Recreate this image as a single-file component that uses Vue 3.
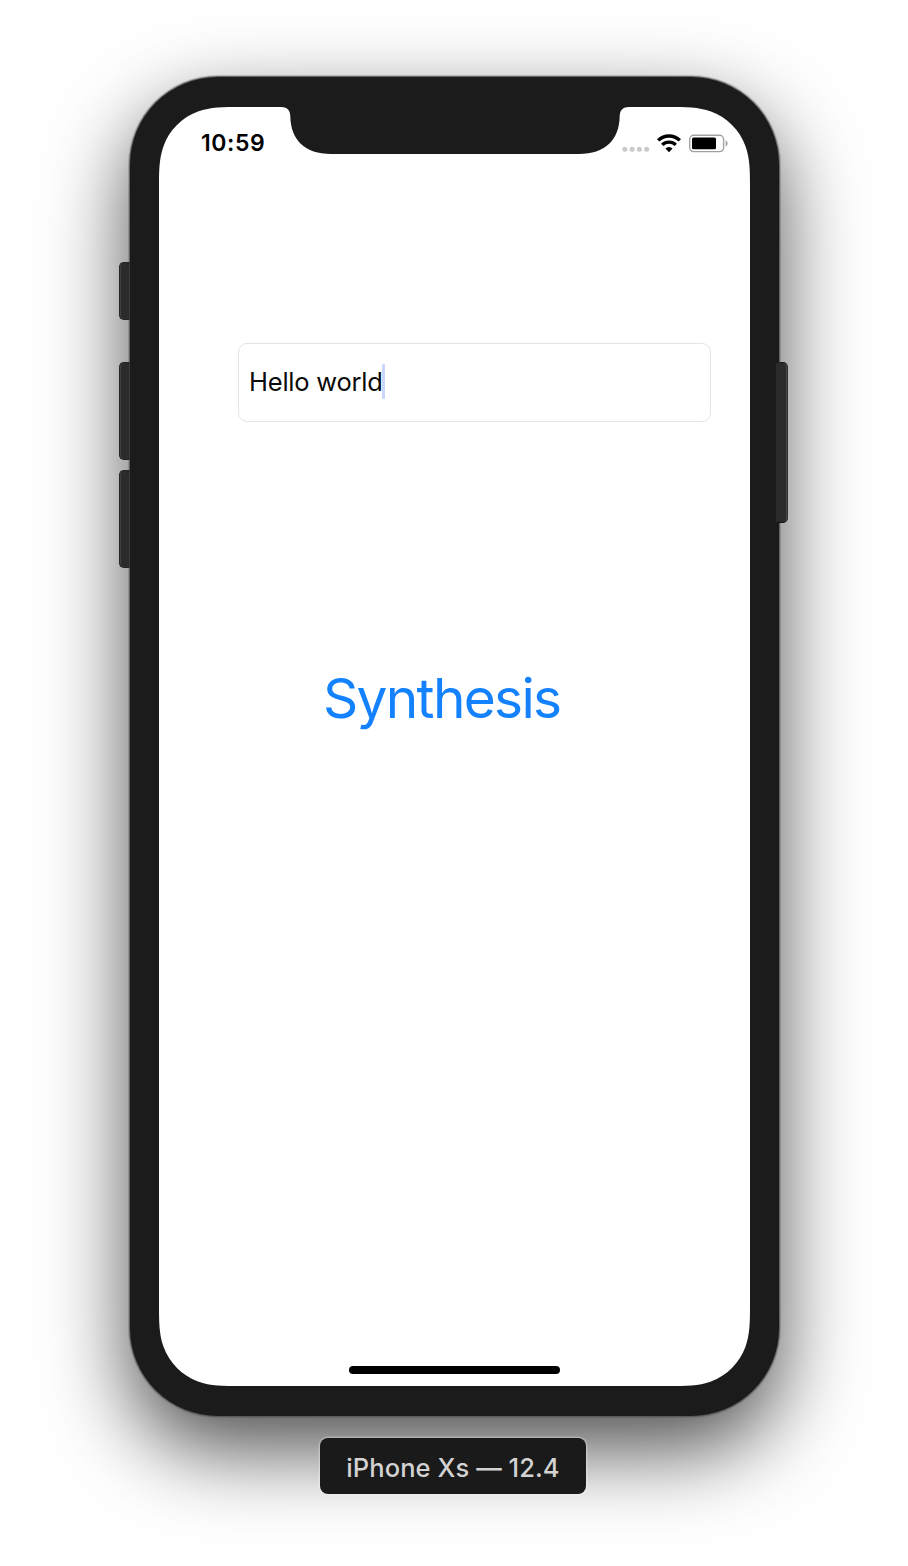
<script setup>
const leftButtons = ['mute', 'volume-up', 'volume-down']
const title = 'iPhone Xs — 12.4'
const signalDots = [4.8, 12.1, 19.4, 26.7]
</script>

<template>
  <main class="stage">
    <section class="phone">
      <i v-for="name in leftButtons" :key="name" class="key left" :class="name"></i>
      <i class="key power"></i>
      <div class="screen">
        <svg class="glass" viewBox="0 0 591 1279" width="591" height="1279" aria-hidden="true">
          <path
            fill="#fff"
            d="M82 0H122C128 0 131 3 131.3 9C131.6 33 146 47 172 47H420C446 47 460.400 33 460.700 9C461 3 464 0 470 0H509C527 0 539.400 0 552 4.600C568 10.500 580.500 23 586.400 39C591 51.600 591 64 591 82V1197C591 1215 591 1227.400 586.400 1240C580.500 1256 568 1268.500 552 1274.400C539.400 1279 527 1279 509 1279H82C64 1279 51.600 1279 39 1274.400C23 1268.500 10.500 1256 4.600 1240C0 1227.400 0 1215 0 1197V82C0 64 0 51.600 4.600 39C10.500 23 23 10.500 39 4.600C51.600 0 64 0 82 0Z"
          />
        </svg>
        <div class="content">
          <header class="status">
            <span class="time">10:59</span>
            <svg class="indicators" viewBox="0 0 110 24" width="110" height="24" aria-hidden="true">
              <circle v-for="x in signalDots" :key="x" :cx="x" cy="18.300" r="2.500" fill="#cacaca" />
              <g fill="none" stroke="#000" stroke-width="3.400">
                <path d="M38.200 9.400A15.500 15.500 0 0 1 59.800 9.400" />
                <path d="M42.200 13.900A9.700 9.700 0 0 1 55.800 13.900" />
              </g>
              <path d="M45.400 17.600A5 5 0 0 1 52.600 17.600L49 21.200Z" />
              <rect x="69.700" y="4.200" width="33.900" height="16.400" rx="4" fill="#fff" stroke="#a2a2a2" stroke-width="1.400" />
              <rect x="72" y="6.500" width="24" height="11.800" rx="1.600" />
              <path fill="#a2a2a2" d="M105.600 9.200Q107.600 10.200 107.600 12.400T105.600 15.600Z" />
            </svg>
          </header>
          <div class="field">
            <span class="value">Hello world</span><i class="caret"></i>
          </div>
          <button class="action" type="button">Synthesis</button>
          <i class="home"></i>
        </div>
      </div>
    </section>
    <div class="caption"><span>{{ title }}</span></div>
  </main>
</template>

<style>
html,
body {
  margin: 0;
  background: #fff;
}
</style>

<style scoped>
.stage {
  box-sizing: border-box;
  width: 908px;
  height: 1566px;
  padding: 77px 0 0 130px;
  overflow: hidden;
  background: #fff;
  font-family: Inter, "Liberation Sans", sans-serif;
}
.phone {
  position: relative;
  box-sizing: border-box;
  width: 649px;
  height: 1339px;
  padding: 30px 28px 30px 29px;
  border-radius: 88px;
  background: #1b1b1b;
  box-shadow: 0 0 0 1px rgba(85, 85, 85, 0.8), 0 0 0 2px rgba(70, 70, 70, 0.25),
    0 33px 84px rgba(0, 0, 0, 0.7);
}
.key {
  position: absolute;
  box-sizing: border-box;
  left: -11px;
  width: 11px;
  background: #2b2b2b;
  border: 1px solid #242424;
  border-right-color: #3b3b3b;
  border-radius: 5px 0 0 5px;
  box-shadow: inset 1px 0 #404040;
}
.mute {
  top: 185px;
  height: 58px;
}
.volume-up {
  top: 285px;
  height: 98px;
}
.volume-down {
  top: 393px;
  height: 98px;
}
.power {
  left: 646px;
  top: 285px;
  width: 12px;
  height: 161px;
  border-color: #1c1c1c #303030 #121212 #2b2b2b;
  border-radius: 2px 5px 5px 2px;
  box-shadow: inset -1px 0 #474747;
}
.screen {
  display: grid;
  width: 591px;
  height: 1279px;
}
.glass,
.content {
  grid-area: 1 / 1;
}
.content {
  z-index: 1;
  display: flex;
  flex-direction: column;
  align-items: flex-start;
}
.status {
  display: flex;
  justify-content: space-between;
  align-items: center;
  box-sizing: border-box;
  width: 591px;
  height: 47px;
  padding: 24px 20px 0 42px;
}
.time {
  padding-top: 1px;
  font-size: 23px;
  font-weight: 600;
  line-height: 26px;
  letter-spacing: 0.6px;
  color: #000;
}
.field {
  display: flex;
  align-items: center;
  box-sizing: border-box;
  width: 473px;
  height: 79px;
  margin: 189px 0 0 79px;
  padding: 0 0 2px 10px;
  border: 1px solid #e4e4e4;
  border-radius: 9px;
  font-size: 25.5px;
  line-height: 36px;
  color: #0a0a0a;
}
.value {
  width: 133px;
  letter-spacing: -0.22px;
  white-space: nowrap;
}
.caret {
  width: 3px;
  height: 35px;
  border-radius: 1px;
  background: #cbd6fc;
}
.action {
  margin: 240px 0 0 164px;
  padding: 0;
  border: 0;
  background: none;
  font-family: inherit;
  font-size: 55px;
  line-height: 72px;
  letter-spacing: -1.7px;
  color: #1482fe;
}
.home {
  width: 211px;
  height: 8px;
  margin: auto 0 12.5px 190px;
  border-radius: 4px;
  background: #000;
}
.caption {
  position: relative;
  display: flex;
  justify-content: center;
  align-items: center;
  width: 266px;
  height: 56px;
  margin: 22px 0 0 190px;
  border-radius: 8px;
  background: #1a1a1a;
  box-shadow: 0 0 0 1.5px rgba(255, 255, 255, 0.28);
  color: #d2d2d2;
  font-size: 25.5px;
  font-weight: 500;
  line-height: 34px;
  letter-spacing: 0.08px;
  white-space: nowrap;
}
.caption span {
  padding-top: 3px;
}
</style>
